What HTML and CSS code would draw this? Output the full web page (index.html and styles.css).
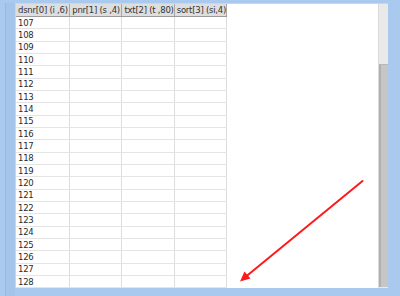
FILE: index.html
```html
<!DOCTYPE html>
<html>
<head>
<meta charset="utf-8">
<link rel="stylesheet" href="styles.css">
</head>
<body>
<div class="desk">
  <div class="stripe"></div>
  <div class="window">
    <div class="content">
      <table class="grid">
        <thead>
          <tr><th class="c1">dsnr[0] (i ,6)</th><th class="c2">pnr[1] (s ,4)</th><th class="c2">txt[2] (t ,80)</th><th class="c2">sort[3] (si,4)</th></tr>
        </thead>
        <tbody>
          <tr><td>107</td><td></td><td></td><td></td></tr>
          <tr><td>108</td><td></td><td></td><td></td></tr>
          <tr><td>109</td><td></td><td></td><td></td></tr>
          <tr><td>110</td><td></td><td></td><td></td></tr>
          <tr><td>111</td><td></td><td></td><td></td></tr>
          <tr><td>112</td><td></td><td></td><td></td></tr>
          <tr><td>113</td><td></td><td></td><td></td></tr>
          <tr><td>114</td><td></td><td></td><td></td></tr>
          <tr><td>115</td><td></td><td></td><td></td></tr>
          <tr><td>116</td><td></td><td></td><td></td></tr>
          <tr><td>117</td><td></td><td></td><td></td></tr>
          <tr><td>118</td><td></td><td></td><td></td></tr>
          <tr><td>119</td><td></td><td></td><td></td></tr>
          <tr><td>120</td><td></td><td></td><td></td></tr>
          <tr><td>121</td><td></td><td></td><td></td></tr>
          <tr><td>122</td><td></td><td></td><td></td></tr>
          <tr><td>123</td><td></td><td></td><td></td></tr>
          <tr><td>124</td><td></td><td></td><td></td></tr>
          <tr><td>125</td><td></td><td></td><td></td></tr>
          <tr><td>126</td><td></td><td></td><td></td></tr>
          <tr><td>127</td><td></td><td></td><td></td></tr>
          <tr><td>128</td><td></td><td></td><td></td></tr>
        </tbody>
      </table>
      <svg class="arrow" width="400" height="296" viewBox="0 0 400 296">
        <line x1="362.5" y1="181" x2="246" y2="276.5" stroke="#ff1a1a" stroke-width="2" stroke-linecap="round"/>
        <polygon points="240,281.5 244.5,271.5 250.5,278.5" fill="#ff1a1a"/>
      </svg>
    </div>
    <div class="scrollbar"><div class="thumb"></div></div>
  </div>
</div>
</body>
</html>
```
FILE: styles.css
```css
html, body {
  margin: 0;
  padding: 0;
}
body {
  width: 400px;
  height: 296px;
  overflow: hidden;
  background: #a9c9ee;
  font-family: "DejaVu Sans", Verdana, sans-serif;
}
.desk {
  position: relative;
  display: flex;
  width: 400px;
  height: 296px;
  padding: 3px 0 0 5px;
  box-sizing: border-box;
}
.stripe {
  width: 10px;
  height: 100%;
  background: #a4c4ea;
  border-left: 1px solid #9bbbe2;
  box-sizing: border-box;
}
.window {
  display: flex;
  width: 373px;
  height: 285px;
  border-top: 1px solid #d4d4d4;
  border-left: 1px solid #c8d6e6;
  box-sizing: border-box;
  background: #ffffff;
}
.content {
  flex: 1;
  overflow: hidden;
  background: #ffffff;
}
.grid {
  border-collapse: collapse;
  table-layout: fixed;
  width: 211px;
  font-size: 8.5px;
  letter-spacing: -0.25px;
  color: #2a2a2a;
}
.grid .c1 { width: 51px; }
.grid .c2 { width: 49px; }
.grid th {
  height: 12px;
  padding: 0 0 0 2px;
  text-align: left;
  font-weight: normal;
  background: #dedede;
  color: #333333;
  border-right: 1px solid #a8a8a8;
  border-bottom: 1px solid #9a9a9a;
  white-space: nowrap;
}
.grid td {
  height: 11.33px;
  padding: 0 0 0 2px;
  border-right: 1px solid #dcdcdc;
  border-bottom: 1px solid #e4e4e4;
  white-space: nowrap;
}
.arrow {
  position: absolute;
  left: 0;
  top: 0;
  pointer-events: none;
}
.scrollbar {
  width: 10px;
  height: 100%;
  background: #e9e9e9;
  border-left: 1px solid #dadada;
  box-sizing: border-box;
  display: flex;
  flex-direction: column;
  justify-content: flex-end;
}
.thumb {
  height: 222px;
  margin-bottom: 1px;
  background: #c6c6c6;
  border-left: 2px solid #b0b0b0;
  border-top: 1px solid #b8b8b8;
}
```
